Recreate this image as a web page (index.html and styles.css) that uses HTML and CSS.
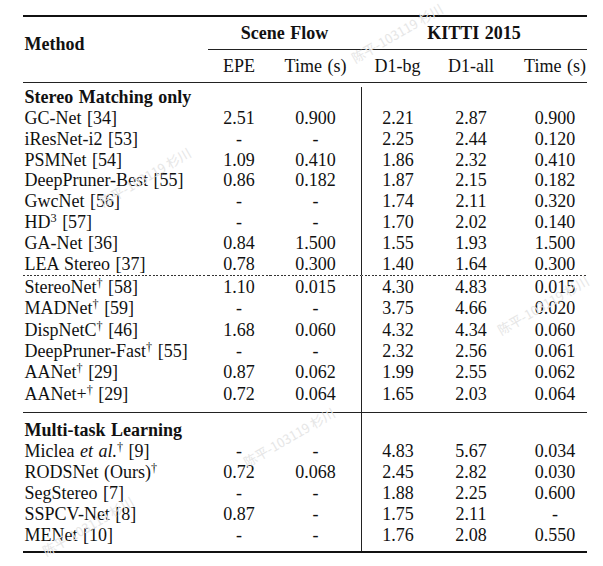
FILE: index.html
```html
<!DOCTYPE html>
<html lang="en">
<head>
<meta charset="utf-8">
<title>Comparison table</title>
<link rel="stylesheet" href="styles.css">
</head>
<body>
<div class="page">
  <table class="results">
    <colgroup>
      <col class="c-method"><col class="c-epe"><col class="c-time"><col class="c-bg"><col class="c-all"><col class="c-ktime">
    </colgroup>
    <thead>
      <tr class="group-row">
        <th rowspan="2" class="method-head">Method</th>
        <th colspan="2" class="group">Scene Flow</th>
        <th colspan="3" class="group">KITTI 2015</th>
      </tr>
      <tr class="sub-row">
        <th>EPE</th><th>Time (s)</th><th>D1-bg</th><th>D1-all</th><th>Time (s)</th>
      </tr>
    </thead>
    <tbody>
      <tr class="gap"><td colspan="6"></td></tr>
      <tr class="section"><td>Stereo Matching only</td><td></td><td></td><td></td><td></td><td></td></tr>
      <tr><td>GC-Net [34]</td><td>2.51</td><td>0.900</td><td>2.21</td><td>2.87</td><td>0.900</td></tr>
      <tr><td>iResNet-i2 [53]</td><td>-</td><td>-</td><td>2.25</td><td>2.44</td><td>0.120</td></tr>
      <tr><td>PSMNet [54]</td><td>1.09</td><td>0.410</td><td>1.86</td><td>2.32</td><td>0.410</td></tr>
      <tr><td>DeepPruner-Best [55]</td><td>0.86</td><td>0.182</td><td>1.87</td><td>2.15</td><td>0.182</td></tr>
      <tr><td>GwcNet [56]</td><td>-</td><td>-</td><td>1.74</td><td>2.11</td><td>0.320</td></tr>
      <tr><td>HD<sup>3</sup> [57]</td><td>-</td><td>-</td><td>1.70</td><td>2.02</td><td>0.140</td></tr>
      <tr><td>GA-Net [36]</td><td>0.84</td><td>1.500</td><td>1.55</td><td>1.93</td><td>1.500</td></tr>
      <tr class="before-dots"><td>LEA Stereo [37]</td><td>0.78</td><td>0.300</td><td>1.40</td><td>1.64</td><td>0.300</td></tr>
      <tr class="dag dotted"><td>StereoNet<sup>†</sup> [58]</td><td>1.10</td><td>0.015</td><td>4.30</td><td>4.83</td><td>0.015</td></tr>
      <tr class="dag"><td>MADNet<sup>†</sup> [59]</td><td>-</td><td>-</td><td>3.75</td><td>4.66</td><td>0.020</td></tr>
      <tr class="dag"><td>DispNetC<sup>†</sup> [46]</td><td>1.68</td><td>0.060</td><td>4.32</td><td>4.34</td><td>0.060</td></tr>
      <tr class="dag"><td>DeepPruner-Fast<sup>†</sup> [55]</td><td>-</td><td>-</td><td>2.32</td><td>2.56</td><td>0.061</td></tr>
      <tr class="dag"><td>AANet<sup>†</sup> [29]</td><td>0.87</td><td>0.062</td><td>1.99</td><td>2.55</td><td>0.062</td></tr>
      <tr class="dag section-end"><td>AANet+<sup>†</sup> [29]</td><td>0.72</td><td>0.064</td><td>1.65</td><td>2.03</td><td>0.064</td></tr>
      <tr class="section midrule"><td>Multi-task Learning</td><td></td><td></td><td></td><td></td><td></td></tr>
      <tr class="dag"><td>Miclea <em>et al.</em><sup>†</sup> [9]</td><td>-</td><td>-</td><td>4.83</td><td>5.67</td><td>0.034</td></tr>
      <tr class="dag"><td>RODSNet (Ours)<sup>†</sup></td><td>0.72</td><td>0.068</td><td>2.45</td><td>2.82</td><td>0.030</td></tr>
      <tr><td>SegStereo [7]</td><td>-</td><td>-</td><td>1.88</td><td>2.25</td><td>0.600</td></tr>
      <tr><td>SSPCV-Net [8]</td><td>0.87</td><td>-</td><td>1.75</td><td>2.11</td><td>-</td></tr>
      <tr class="last"><td>MENet [10]</td><td>-</td><td>-</td><td>1.76</td><td>2.08</td><td>0.550</td></tr>
    </tbody>
  </table>
  <span class="wm wm1">陈平-103119 杉川</span>
  <span class="wm wm2">陈平-103119 杉川</span>
  <span class="wm wm3">陈平-103119 杉川</span>
  <span class="wm wm4">陈平-103119 杉川</span>
  <span class="wm wm5">陈平-103119 杉川</span>
</div>
</body>
</html>
```

FILE: styles.css
```css
html, body {
  margin: 0;
  padding: 0;
  background: #fff;
}

.page {
  position: relative;
  width: 603px;
  height: 566px;
  overflow: hidden;
  padding: 15px 0 0 23px;
  box-sizing: border-box;
}

.results {
  border-collapse: separate;
  border-spacing: 0;
  table-layout: fixed;
  width: 564px;
  font-family: "Liberation Serif", "Times New Roman", serif;
  font-size: 18px;
  line-height: 20.8px;
  word-spacing: 1px;
  color: #111;
  border-top: 2px solid #111;
  border-bottom: 2px solid #111;
}

.c-method { width: 185px; }
.c-epe { width: 62px; }
.c-time { width: 91px; }
.c-bg { width: 73px; }
.c-all { width: 74px; }
.c-ktime { width: 79px; }

.results th,
.results td {
  padding: 0;
  text-align: center;
  white-space: nowrap;
  vertical-align: top;
}

.results th {
  font-weight: normal;
}

.results th:last-child,
.results td:last-child {
  padding-left: 15px;
}

.results td:first-child,
.results th.method-head {
  text-align: left;
  padding-left: 1.5px;
}

.group-row th {
  padding-top: 6px;
  padding-bottom: 5.5px;
}

.group-row th.group {
  font-weight: bold;
  border-bottom: 1px solid #222;
}

.group-row th.group:last-child {
  padding-left: 0;
}

.results th.method-head {
  font-weight: bold;
  padding-top: 16.5px;
  border-bottom: 1px solid #222;
}

.sub-row th {
  padding-top: 5.4px;
  padding-bottom: 5.2px;
  border-bottom: 1px solid #222;
}

.gap td {
  height: 4px;
  padding: 0;
}

.results tbody td:nth-child(4) {
  border-left: 1px solid #222;
}

.section td:first-child {
  font-weight: bold;
}

.section:not(.midrule) td {
  padding-top: 0.5px;
}

.dag td {
  line-height: 21.4px;
}

.before-dots td {
  padding-bottom: 1px;
}

.dotted td {
  border-top: 1px solid transparent;
  background-image: repeating-linear-gradient(to right, #333 0, #333 2px, transparent 2px, transparent 3.6px);
  background-size: 100% 1px;
  background-repeat: no-repeat;
  background-origin: border-box;
  background-position: left top;
  padding-top: 0.5px;
}

.section-end td {
  padding-bottom: 7px;
}

.midrule td {
  border-top: 1px solid #222;
  padding-top: 6.5px;
}

.last td {
  padding-bottom: 5.5px;
}

sup {
  font-size: 0.68em;
  line-height: 0;
  vertical-align: 0.5em;
}

em {
  font-style: italic;
}

.wm {
  position: absolute;
  font-family: "Noto Sans CJK SC", sans-serif;
  font-size: 13px;
  color: #e6e6e6;
  white-space: nowrap;
  pointer-events: none;
  transform: translate(-50%, -50%) rotate(-30deg);
}

.wm1 { left: 397px; top: 33px; }
.wm2 { left: 145px; top: 177px; }
.wm3 { left: 543px; top: 305px; }
.wm4 { left: 289px; top: 437px; }
.wm5 { left: 88px; top: 526px; }
```
